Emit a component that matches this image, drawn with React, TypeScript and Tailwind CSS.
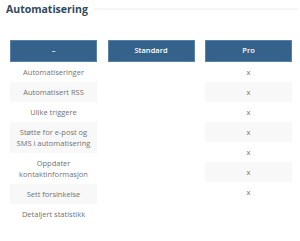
const features: string[][] = [
  ["Automatiseringer"],
  ["Automatisert RSS"],
  ["Ulike triggere"],
  ["Støtte for e-post og", "SMS i automatisering"],
  ["Oppdater", "kontaktinformasjon"],
  ["Sett forsinkelse"],
  ["Detaljert statistikk"],
]

function Column({ title, rows }: { title: string; rows: string[][] }) {
  return (
    <div className="flex flex-col">
      <div className="h-[22px] flex items-center justify-center bg-[#35628b] border border-[#5a82a6] text-white text-[7.5px] font-semibold">
        {title}
      </div>
      {rows.map((r, i) => (
        <div
          key={i}
          className={`flex flex-col items-center justify-center py-[4.5px] min-h-[20px] text-[7.5px] leading-[11px] text-[#737373] text-center ${
            i % 2 === 1 ? "bg-[#f8f8f8]" : "bg-white"
          }`}
        >
          {r.map((line, j) => (
            <span key={j}>{line}</span>
          ))}
        </div>
      ))}
    </div>
  )
}

export default function App() {
  return (
    <div className="w-[300px] h-[241px] bg-white overflow-hidden" style={{ fontFamily: "'Open Sans', sans-serif" }}>
      <div className="flex items-center gap-[6px] pl-[6px] pr-[2px] pt-[1px]">
        <h2 className="text-[10.5px] font-bold text-[#2f4a5c] leading-[16px] whitespace-nowrap">Automatisering</h2>
        <div className="flex-1 h-[2px] bg-[#f6f6f6]" />
      </div>
      <div className="grid grid-cols-[87px_87px_87px] gap-x-[10.5px] items-start pl-[10px] mt-[23px]">
        <Column title="–" rows={features} />
        <Column title="Standard" rows={[]} />
        <Column title="Pro" rows={Array.from({ length: 7 }, () => ["x"])} />
      </div>
    </div>
  )
}
